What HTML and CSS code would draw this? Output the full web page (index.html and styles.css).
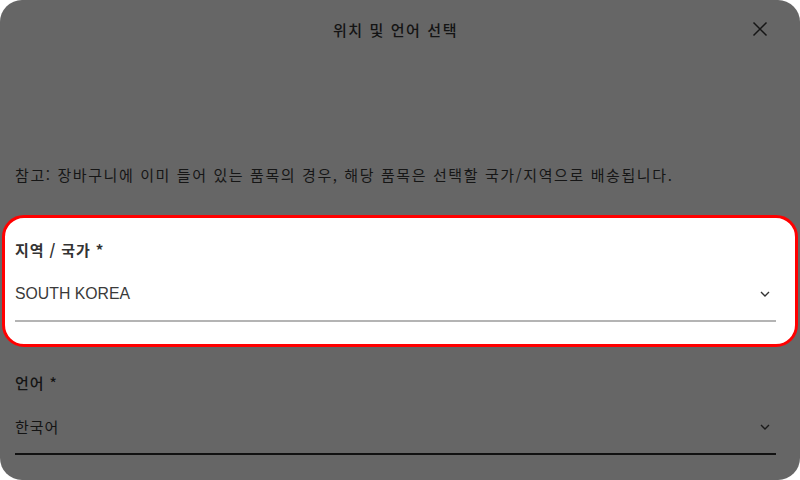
FILE: index.html
```html
<!DOCTYPE html>
<html lang="ko">
<head>
<meta charset="utf-8">
<title>위치 및 언어 선택</title>
<link rel="stylesheet" href="styles.css">
</head>
<body>
<div class="panel">
  <header class="header">
    <span></span>
    <h1 class="title">위치 및 언어 선택</h1>
    <button class="close" aria-label="닫기">
      <svg width="16" height="16" viewBox="0 0 16 16"><path d="M1.5 1.5 L14.5 14.5 M14.5 1.5 L1.5 14.5" stroke="#151515" stroke-width="1.5" fill="none"/></svg>
    </button>
  </header>
  <main class="content">
    <p class="note">참고: 장바구니에 이미 들어 있는 품목의 경우, 해당 품목은 선택할 국가/지역으로 배송됩니다.</p>
    <div class="highlight">
      <div class="field">
        <div class="label">지역 / 국가 *</div>
        <div class="select select-light">
          <span class="value latin">SOUTH KOREA</span>
          <svg class="chev" width="10" height="6" viewBox="0 0 10 6"><path d="M1 1 L5 5 L9 1" stroke="#333" stroke-width="1.4" fill="none"/></svg>
        </div>
      </div>
    </div>
    <div class="field field-lang">
      <div class="label label-normal">언어 *</div>
      <div class="select select-dark">
        <span class="value">한국어</span>
        <svg class="chev" width="10" height="6" viewBox="0 0 10 6"><path d="M1 1 L5 5 L9 1" stroke="#1a1a1a" stroke-width="1.4" fill="none"/></svg>
      </div>
    </div>
  </main>
</div>
</body>
</html>
```
FILE: styles.css
```css
* { box-sizing: border-box; }
html, body { margin: 0; padding: 0; background: #ffffff; }
body {
  font-family: "Noto Sans CJK KR", "Liberation Sans", sans-serif;
  font-size: 15px;
  color: #141414;
}
.panel {
  width: 800px;
  height: 480px;
  background: #666666;
  border-radius: 22px;
  overflow: hidden;
}
.header {
  height: 58px;
  display: grid;
  grid-template-columns: 1fr auto 1fr;
  align-items: center;
}
.title {
  margin: 0 9px 0 0;
  font-size: 15px;
  font-weight: 500;
  color: #141414;
  letter-spacing: 1.6px;
}
.close {
  justify-self: end;
  margin-right: 32px;
  width: 16px;
  height: 16px;
  padding: 0;
  border: 0;
  background: none;
  display: flex;
}
.content {
  padding: 0 24px 0 15px;
}
.note {
  margin: 105px 0 0;
  line-height: 24px;
  color: #161616;
  letter-spacing: 1.6px;
}
.highlight {
  margin: 28px -22px 0 -13px;
  border: 3px solid #ff0000;
  border-radius: 22px;
  background: #ffffff;
  padding: 22px 19px 22px 10px;
}
.field-lang { margin-top: 26px; }
.label {
  line-height: 20px;
  font-weight: 700;
  color: #333333;
  letter-spacing: 0.9px;
}
.label-normal {
  font-weight: 500;
  color: #141414;
}
.select {
  margin-top: 24px;
  display: flex;
  align-items: center;
  justify-content: space-between;
  padding-bottom: 16px;
}
.select-light { border-bottom: 2px solid #b4b4b4; }
.select-dark { border-bottom: 2px solid #111111; }
.value { line-height: 20px; letter-spacing: 1px; }
.select-light .value { color: #3a3a3a; }
.latin {
  font-family: "Liberation Sans", "Noto Sans CJK KR", sans-serif;
  font-size: 15.8px;
  letter-spacing: 0;
}
.chev { margin-right: 6px; }
```
